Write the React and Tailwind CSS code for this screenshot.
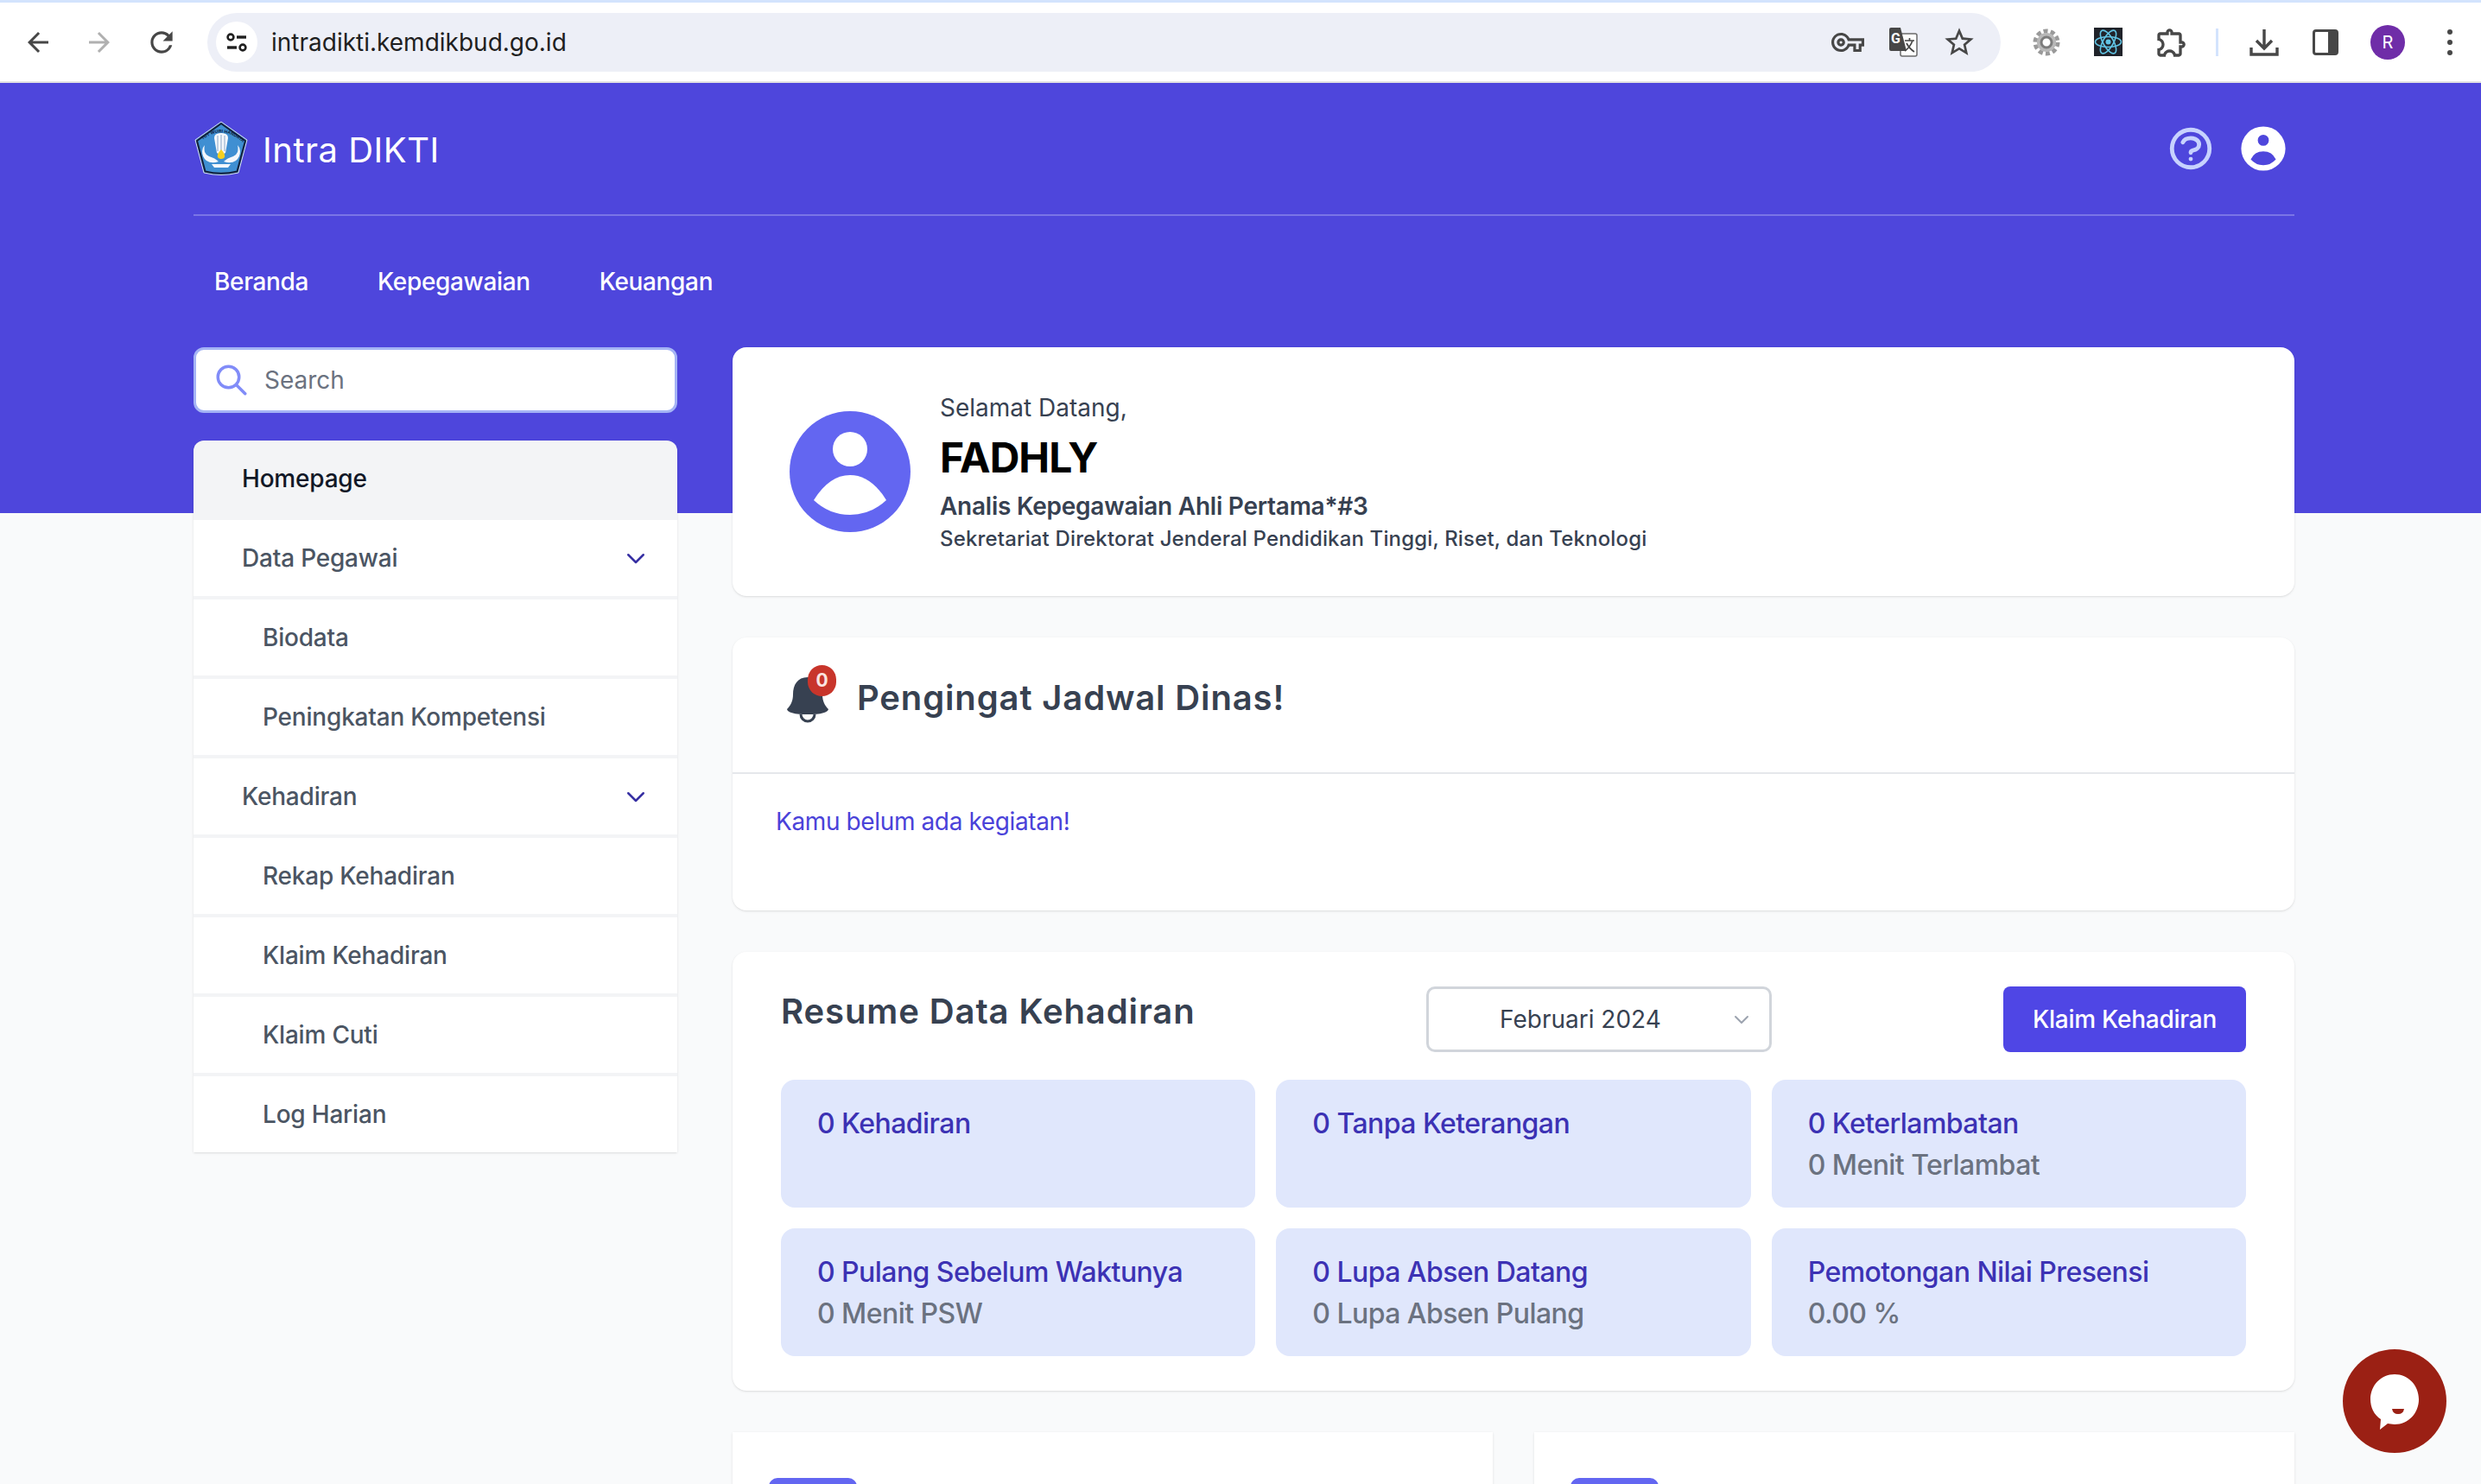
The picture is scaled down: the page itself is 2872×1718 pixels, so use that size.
import {
  HiOutlineQuestionMarkCircle,
  HiUserCircle,
  HiOutlineSearch,
  HiOutlineChevronDown,
} from 'react-icons/hi';
import {
  MdArrowBack,
  MdArrowForward,
  MdRefresh,
  MdOutlineVpnKey,
  MdStarBorder,
  MdOutlineExtension,
} from 'react-icons/md';

const MENU = [
  { label: 'Homepage', active: true },
  { label: 'Data Pegawai', caret: true },
  { label: 'Biodata', sub: true },
  { label: 'Peningkatan Kompetensi', sub: true },
  { label: 'Kehadiran', caret: true },
  { label: 'Rekap Kehadiran', sub: true },
  { label: 'Klaim Kehadiran', sub: true },
  { label: 'Klaim Cuti', sub: true },
  { label: 'Log Harian', sub: true },
];

const STATS = [
  { title: '0 Kehadiran' },
  { title: '0 Tanpa Keterangan' },
  { title: '0 Keterlambatan', note: '0 Menit Terlambat' },
  { title: '0 Pulang Sebelum Waktunya', note: '0 Menit PSW' },
  { title: '0 Lupa Absen Datang', note: '0 Lupa Absen Pulang' },
  { title: 'Pemotongan Nilai Presensi', note: '0.00 %' },
];

function TuneIcon() {
  return (
    <svg width="28" height="28" viewBox="0 0 28 28" fill="none" stroke="#1f1f1f" strokeWidth="2.6">
      <circle cx="7" cy="8" r="3.4" />
      <path d="M14 8h11" strokeWidth="3.4" />
      <circle cx="21" cy="20" r="3.4" />
      <path d="M3 20h11" strokeWidth="3.4" />
    </svg>
  );
}

function TranslateIcon() {
  return (
    <svg width="34" height="34" viewBox="0 0 34 34">
      <rect x="14" y="7" width="19" height="26" rx="2" fill="#fff" stroke="#6b6b6b" strokeWidth="1.5" />
      <path d="M1 2a2 2 0 0 1 2-2h11l7 27H3a2 2 0 0 1-2-2z" fill="#474747" />
      <text x="3" y="18" fontSize="16" fontWeight="700" fill="#fff" fontFamily="Roboto, sans-serif">G</text>
      <path d="M19 15h11M24.500 12v3M28 15q-3 8-9 12M21 18q3 6 9 10" fill="none" stroke="#474747" strokeWidth="1.700" />
    </svg>
  );
}

function GearIcon() {
  return (
    <svg width="34" height="34" viewBox="0 0 34 34" fill="none">
      <circle cx="17" cy="17" r="13" stroke="#9a9a9a" strokeWidth="5" strokeDasharray="5 3.2" />
      <circle cx="17" cy="17" r="11" fill="#b8b8b8" />
      <circle cx="17" cy="17" r="6" fill="#fff" stroke="#7d7d7d" strokeWidth="3" />
    </svg>
  );
}

function ReactIcon() {
  return (
    <svg width="33" height="33" viewBox="0 0 33 33" fill="none" stroke="#61c4e4" strokeWidth="1.6">
      <rect width="33" height="33" fill="#20232a" stroke="none" />
      <ellipse cx="16.5" cy="16.5" rx="15" ry="6" />
      <ellipse cx="16.5" cy="16.5" rx="15" ry="6" transform="rotate(60 16.5 16.5)" />
      <ellipse cx="16.5" cy="16.5" rx="15" ry="6" transform="rotate(120 16.5 16.5)" />
      <circle cx="16.5" cy="16.5" r="3" fill="#61c4e4" stroke="none" />
    </svg>
  );
}

function DownloadIcon() {
  return (
    <svg width="34" height="34" viewBox="0 0 34 34" fill="none" stroke="#474747" strokeWidth="3.4">
      <path d="M17 2v22M8 15l9 9 9-9M2 23v8h30v-8" />
    </svg>
  );
}

function SidePanelIcon() {
  return (
    <svg width="30" height="30" viewBox="0 0 30 30">
      <rect x="1.5" y="1.5" width="27" height="27" rx="2.5" fill="#fff" stroke="#474747" strokeWidth="3" />
      <rect x="18" y="1.5" width="10.5" height="27" fill="#474747" />
    </svg>
  );
}

function ChromeBar() {
  return (
    <div className="h-[96px] shrink-0 bg-white border-t-[3px] border-t-[#d3e3fd] border-b-2 border-b-[#e3e3e3] flex items-center font-['Inter',sans-serif]">
      <div className="w-[240px] flex items-center text-[#474747] pl-[26px] gap-[35px] shrink-0">
        <MdArrowBack size={36} />
        <MdArrowForward size={36} className="text-[#b0b0b0]" />
        <MdRefresh size={38} />
      </div>
      <div className="w-[2076px] h-[68px] shrink-0 rounded-full bg-[#edeff7] flex items-center pl-[10px] pr-[28px]">
        <div className="w-[48px] h-[48px] rounded-full bg-white flex items-center justify-center">
          <TuneIcon />
        </div>
        <span className="ml-[16px] text-[28px] text-[#1f1f1f]">intradikti.kemdikbud.go.id</span>
        <div className="ml-auto flex items-center gap-[28px] text-[#474747]">
          <MdOutlineVpnKey size={38} />
          <TranslateIcon />
          <MdStarBorder size={40} />
        </div>
      </div>
      <div className="flex-1 flex items-center pl-[36px] text-[#474747]">
        <GearIcon />
        <div className="ml-[38px]"><ReactIcon /></div>
        <MdOutlineExtension size={40} className="ml-[37px]" />
        <div className="ml-[31px] w-[3px] h-[32px] bg-[#d3e3fd]" />
        <div className="ml-[36px]"><DownloadIcon /></div>
        <div className="ml-[39px]"><SidePanelIcon /></div>
        <div className="ml-[37px] w-[40px] h-[40px] rounded-full bg-[#6f2da8] text-white text-[20px] flex items-center justify-center">R</div>
        <div className="ml-[49px] flex flex-col gap-[6px]">
          <span className="w-[6px] h-[6px] rounded-full bg-[#474747]" />
          <span className="w-[6px] h-[6px] rounded-full bg-[#474747]" />
          <span className="w-[6px] h-[6px] rounded-full bg-[#474747]" />
        </div>
      </div>
    </div>
  );
}

function Logo() {
  return (
    <svg width="64" height="64" viewBox="0 0 64 64">
      <path d="M32 1 62 22 52 60Q32 65 12 60L2 22Z" fill="#3f8fd2" stroke="#d8dcea" strokeWidth="1" strokeLinejoin="round" />
      <path d="M32 3 60 23 50.500 58.500Q32 63 13.500 58.500L4 23Z" fill="#3f8fd2" stroke="#14213a" strokeWidth="2" strokeLinejoin="round" />
      <path id="logo-arc" d="M8 24Q32 3 56 24" fill="none" />
      <text fontSize="5.200" fontWeight="700" fill="#0f1d3a" fontFamily="'Liberation Sans', sans-serif">
        <textPath href="#logo-arc" startOffset="6%">TUT WURI HANDAYANI</textPath>
      </text>
      <path d="M24 20q0-4 3-5 5-2 10 0 3 1 3 5l-3 17q-5 3-10 0z" fill="#f4f7fb" />
      <path d="M28 17v18M32 16v18M36 17v18" stroke="#8aa7c9" strokeWidth="1" />
      <path d="M13 28q-1 4 0 8 1 3 5 5 7 2 11 6-8 3-14-1-5-4-5-11 0-4 3-7zM51 28q1 4 0 8-1 3-5 5-7 2-11 6 8 3 14-1 5-4 5-11 0-4-3-7z" fill="#f4f7fb" />
      <path d="M32 33q5 5 4 9-1 2-4 2t-4-2q-1-4 4-9z" fill="#f5d020" />
      <path d="M21 50h22l-3 4H24z" fill="#f4f7fb" />
    </svg>
  );
}

function TopHeader() {
  return (
    <div className="h-[498px] bg-[#4e46dc] shrink-0">
      <div className="ml-[224px] w-[2432px]">
        <div className="h-[154px] border-b-2 border-[#7a75e6] flex items-center justify-between">
          <div className="flex items-center gap-[16px]">
            <Logo />
            <span className="text-[40px] tracking-[0.5px] text-white pt-[3px]">Intra DIKTI</span>
          </div>
          <div className="flex items-center gap-[23px] mr-[4px]">
            <HiOutlineQuestionMarkCircle size={58} className="text-[#c7d2fe]" />
            <HiUserCircle size={64} className="text-white" />
          </div>
        </div>
        <nav className="h-[152px] flex items-center gap-[32px] text-[28px] font-medium tracking-[-0.35px] text-white">
          <span className="px-[24px]">Beranda</span>
          <span className="px-[24px]">Kepegawaian</span>
          <span className="px-[24px]">Keuangan</span>
        </nav>
      </div>
    </div>
  );
}

function Sidebar() {
  return (
    <aside className="w-[560px] shrink-0">
      <div className="h-[76px] rounded-[12px] border-[3px] border-[#a5b4f5] bg-white flex items-center pl-[20px] gap-[17px] text-[28px] text-[#6b7280]">
        <HiOutlineSearch size={42} className="text-[#818cf8]" />
        <span>Search</span>
      </div>
      <div className="mt-[32px] rounded-t-[12px] overflow-hidden shadow-sm">
        {MENU.map((item) => (
          <div
            key={item.label}
            className={`h-[92px] last:h-[88px] last:border-b-0 flex items-center justify-between border-b-4 border-[#f3f4f6] text-[28px] font-medium tracking-[-0.2px] pr-[33px] ${
              item.active ? 'bg-[#f3f4f6] text-[#111827]' : 'bg-white text-[#4b5563]'
            } ${item.sub ? 'pl-[80px]' : 'pl-[56px]'}`}
          >
            <span>{item.label}</span>
            {item.caret && <HiOutlineChevronDown size={30} className="text-[#3730a3]" />}
          </div>
        ))}
      </div>
    </aside>
  );
}

function WelcomeCard() {
  return (
    <section className="h-[288px] bg-white rounded-[16px] shadow flex items-center pl-[64px]">
      <svg width="144" height="144" viewBox="0 0 144 144" className="shrink-0">
        <circle cx="72" cy="72" r="70" fill="#6366f1" />
        <ellipse cx="72" cy="46" rx="20" ry="20" fill="#fff" />
        <path d="M30 105Q48 76 72 76t42 29Q96 122 72 122T30 105z" fill="#fff" />
      </svg>
      <div className="ml-[32px] text-[#374151] mt-[2px]">
        <p className="text-[28px] leading-[40px] -mt-[1px]">Selamat Datang,</p>
        <h2 className="text-[48px] leading-[64px] font-bold text-black tracking-[-1px] mt-[6px]">FADHLY</h2>
        <p className="text-[28px] leading-[40px] font-semibold tracking-[-0.25px] mt-[4px]">Analis Kepegawaian Ahli Pertama*#3</p>
        <p className="text-[24px] leading-[36px] font-medium tracking-[0.15px]">Sekretariat Direktorat Jenderal Pendidikan Tinggi, Riset, dan Teknologi</p>
      </div>
    </section>
  );
}

function BellWithBadge() {
  return (
    <div className="relative w-[56px] h-[56px] shrink-0">
      <svg width="50" height="56" viewBox="0 0 50 56" className="mt-[1px]">
        <path d="M25 3C13 3 8 12 8 23c0 8-3 13-7 17 1 3 3 3 5 4 6 2 12 2 19 2s13 0 19-2c2-1 4-1 5-4-4-4-7-9-7-17C42 12 37 3 25 3z" fill="#374151" />
        <path d="M17 46a8 8 0 0 0 16 0" fill="none" stroke="#374151" strokeWidth="3" />
      </svg>
      <span className="absolute -top-[10px] left-[25px] w-[33px] h-[36px] rounded-full bg-[#c8352b] text-[#fbe4e1] text-[21px] font-bold flex items-center justify-center">0</span>
    </div>
  );
}

function ReminderCard() {
  return (
    <section className="h-[316px] bg-white rounded-[16px] shadow">
      <div className="h-[158px] border-b-2 border-[#e5e7eb] flex items-center pl-[62px] gap-[26px] pb-[16px]">
        <BellWithBadge />
        <h3 className="text-[40px] font-semibold text-[#374151] tracking-[0.85px]">Pengingat Jadwal Dinas!</h3>
      </div>
      <p className="pl-[50px] pt-[35px] text-[28px] leading-[40px] tracking-[-0.38px] text-[#4a42d9]">Kamu belum ada kegiatan!</p>
    </section>
  );
}

function AttendanceCard() {
  return (
    <section className="h-[508px] bg-white rounded-[16px] shadow px-[56px] pt-[40px]">
      <div className="h-[76px] flex items-start justify-between">
        <h3 className="w-[747px] text-[40px] leading-[56px] pt-[1px] font-semibold text-[#374151] tracking-[0.9px] shrink-0">Resume Data Kehadiran</h3>
        <div className="w-[400px] h-[76px] shrink-0 rounded-[10px] border-[3px] border-[#d1d5db] bg-white flex items-center pl-[82px] pr-[20px] justify-between text-[28px] text-[#374151]">
          <span>Februari 2024</span>
          <HiOutlineChevronDown size={24} className="text-[#9ca3af]" />
        </div>
        <div className="ml-auto w-[281px] h-[76px] rounded-[8px] bg-[#4f46e5] text-white text-[28px] font-medium tracking-[-0.24px] flex items-center justify-center">Klaim Kehadiran</div>
      </div>
      <div className="mt-[32px] grid grid-cols-3 gap-[24px]">
        {STATS.map((stat) => (
          <div key={stat.title} className="h-[148px] rounded-[16px] bg-[#e0e7fc] px-[42px] pt-[27px] text-[32px] leading-[48px] font-medium tracking-[-0.55px]">
            <p className="text-[#3c32b4]">{stat.title}</p>
            {stat.note && <p className="text-[#6b7280]">{stat.note}</p>}
          </div>
        ))}
      </div>
    </section>
  );
}

function BottomCards() {
  return (
    <div className="grid grid-cols-2 gap-[48px]">
      <section className="h-[200px] bg-white shadow-sm pl-[42px] pt-[53px]">
        <div className="w-[102px] h-[60px] rounded-t-[10px] bg-[#6366f1]" />
      </section>
      <section className="h-[200px] bg-white shadow-sm pl-[42px] pt-[53px]">
        <div className="w-[102px] h-[60px] rounded-t-[10px] bg-[#6366f1]" />
      </section>
    </div>
  );
}

function ChatWidget() {
  return (
    <div className="fixed left-[2712px] top-[1562px] w-[120px] h-[120px] rounded-full bg-[#9b2014] flex items-center justify-center">
      <svg width="60" height="66" viewBox="0 0 60 66" className="mt-[4px]">
        <path d="M30 0c16 0 28 13 28 29S46 58 30 58c-3 0-6-1-8-1l-9 7 1-12C6 47 2 38 2 29 2 13 14 0 30 0z" fill="#fff" />
        <path d="M27 40h14q-1 6-7 6t-7-6z" fill="#9b2014" />
      </svg>
    </div>
  );
}

export default function App() {
  return (
    <div className="relative h-[1718px] overflow-hidden bg-[#f9fafb] font-['Inter',sans-serif] flex flex-col">
      <ChromeBar />
      <TopHeader />
      <div className="-mt-[192px] ml-[224px] w-[2432px] flex gap-[64px]">
        <Sidebar />
        <main className="flex-1 flex flex-col gap-[48px]">
          <WelcomeCard />
          <ReminderCard />
          <AttendanceCard />
          <BottomCards />
        </main>
      </div>
      <ChatWidget />
    </div>
  );
}
